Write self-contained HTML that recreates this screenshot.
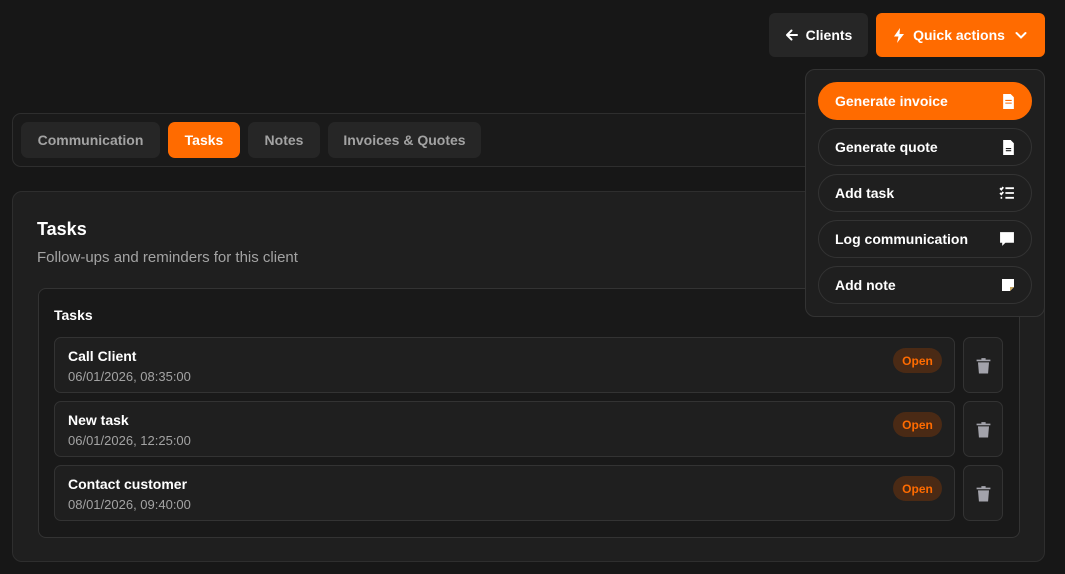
<!DOCTYPE html>
<html><head><style>
*{box-sizing:border-box;margin:0;padding:0}
body{width:1065px;height:574px;background:#171717;font-family:"Liberation Sans",sans-serif;color:#fff;position:relative;overflow:hidden}
.abs{position:absolute}
.btn{position:absolute;border-radius:6px;display:flex;align-items:center;justify-content:center;font-weight:bold;font-size:14px}
.tab{position:absolute;top:122px;height:36px;border-radius:7px;background:#262626;color:#a3a3a3;font-weight:bold;font-size:14px;display:flex;align-items:center;justify-content:center}
.item{position:absolute;left:818px;width:214px;height:38px;border-radius:19px;border:1px solid #333;display:flex;align-items:center;justify-content:space-between;padding:0 16px;font-weight:bold;font-size:14px;background:#1f1f1f}
.row{position:absolute;left:54px;width:901px;height:56px;border:1px solid #333;border-radius:7px;background:#1f1f1f}
.row .t{position:absolute;left:13px;top:10px;font-size:14px;font-weight:bold}
.row .d{position:absolute;left:13px;top:31px;font-size:13px;color:#a3a3a3}
.row .b{position:absolute;right:12px;top:10px;width:49px;height:25px;border-radius:13px;background:#4a2a15;color:#ff6b00;font-size:12px;font-weight:bold;display:flex;align-items:center;justify-content:center}
.tr{position:absolute;left:963px;width:40px;height:56px;border:1px solid #333;border-radius:7px;background:#1f1f1f;display:flex;align-items:center;justify-content:center}
</style></head><body>
<div class="btn" style="left:769px;top:13px;width:99px;height:44px;background:#262626">
<svg width="14" height="14" viewBox="0 0 14 14" style="margin-right:7px"><path d="M12 7H2M6.5 2.5L2 7l4.5 4.5" stroke="#fff" stroke-width="2" fill="none" stroke-linecap="round" stroke-linejoin="round"/></svg>Clients</div>
<div class="btn" style="left:876px;top:13px;width:169px;height:44px;background:#ff6b00">
<svg width="12" height="15" viewBox="0 0 12 15" style="margin-right:8px"><path d="M7 0L1 8.5h4.5L4 15l7-9H6.5z" fill="#fff"/></svg>Quick actions
<svg width="14" height="14" viewBox="0 0 14 14" style="margin-left:9px"><path d="M2.5 5l4.5 4.5L11.5 5" stroke="#fff" stroke-width="2" fill="none" stroke-linecap="round"/></svg></div>

<div class="abs" style="left:12px;top:113px;width:1033px;height:54px;border:1px solid #2e2e2e;border-radius:9px;background:#1a1a1a"></div>
<div class="tab" style="left:21px;width:139px">Communication</div>
<div class="tab" style="left:168px;width:72px;background:#ff6b00;color:#fff">Tasks</div>
<div class="tab" style="left:248px;width:72px">Notes</div>
<div class="tab" style="left:328px;width:153px">Invoices &amp; Quotes</div>

<div class="abs" style="left:12px;top:191px;width:1033px;height:371px;border:1px solid #2e2e2e;border-radius:10px;background:#1f1f1f"></div>
<div class="abs" style="left:37px;top:219px;font-size:18px;font-weight:bold">Tasks</div>
<div class="abs" style="left:37px;top:249px;font-size:15px;color:#a3a3a3">Follow-ups and reminders for this client</div>
<div class="abs" style="left:38px;top:288px;width:982px;height:250px;border:1px solid #333;border-radius:8px;background:#191919"></div>
<div class="abs" style="left:54px;top:307px;font-size:14px;font-weight:bold">Tasks</div>

<div class="row" style="top:337px"><div class="t">Call Client</div><div class="d">06/01/2026, 08:35:00</div><div class="b">Open</div></div>
<div class="row" style="top:401px"><div class="t">New task</div><div class="d">06/01/2026, 12:25:00</div><div class="b">Open</div></div>
<div class="row" style="top:465px"><div class="t">Contact customer</div><div class="d">08/01/2026, 09:40:00</div><div class="b">Open</div></div>
<div class="tr" style="top:337px"><svg width="15" height="17" viewBox="0 0 14 16"><path d="M0.5 2.5h13v1.5H0.5zM5 1h4v1.5H5zM1.8 5h10.4l-0.9 10.5H2.7z" fill="#a3a3ab"/></svg></div>
<div class="tr" style="top:401px"><svg width="15" height="17" viewBox="0 0 14 16"><path d="M0.5 2.5h13v1.5H0.5zM5 1h4v1.5H5zM1.8 5h10.4l-0.9 10.5H2.7z" fill="#a3a3ab"/></svg></div>
<div class="tr" style="top:465px"><svg width="15" height="17" viewBox="0 0 14 16"><path d="M0.5 2.5h13v1.5H0.5zM5 1h4v1.5H5zM1.8 5h10.4l-0.9 10.5H2.7z" fill="#a3a3ab"/></svg></div>

<div class="abs" style="left:805px;top:69px;width:240px;height:248px;border:1px solid #333;border-radius:10px;background:#1f1f1f"></div>
<div class="item" style="top:82px;background:#ff6b00;border-color:#ff6b00">Generate invoice<svg width="13" height="15" viewBox="0 0 12 14"><path d="M1 0h7l3 3v11H1z" fill="#fff"/><path d="M3 6h6M3 8.5h6" stroke="#ff6b00" stroke-width="1"/></svg></div>
<div class="item" style="top:128px">Generate quote<svg width="13" height="15" viewBox="0 0 12 14"><path d="M1 0h7l3 3v11H1z" fill="#fff"/><path d="M3.5 8h5M3.5 10h5" stroke="#1f1f1f" stroke-width="1"/></svg></div>
<div class="item" style="top:174px">Add task<svg width="16" height="14" viewBox="0 0 15 13"><path d="M1 2l1.2 1.2L4 1M1 6.5l1.2 1.2L4 5.5M1.5 11h1.5M6 2h8M6 6.5h8M6 11h8" stroke="#fff" stroke-width="1.7" fill="none"/></svg></div>
<div class="item" style="top:220px">Log communication<svg width="16" height="16" viewBox="0 0 15 15"><path d="M1 1h13v10H6l-3 3v-3H1z" fill="#fff"/></svg></div>
<div class="item" style="top:266px">Add note<svg width="14" height="14" viewBox="0 0 14 14"><path d="M1 1h12v8l-4 4H1z" fill="#fff"/><path d="M9 13V9h4" fill="#c9a860"/></svg></div>
</body></html>
